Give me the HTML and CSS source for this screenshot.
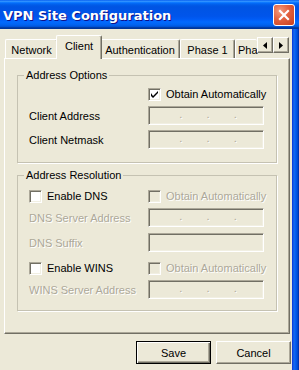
FILE: index.html
```html
<!DOCTYPE html>
<html lang="en">
<head>
  <meta charset="UTF-8" />
  <title>VPN Site Configuration</title>
  <link rel="stylesheet" href="styles.css">
</head>
<body>

  <div class="window">

    <!-- === Title Bar === -->
    <div class="titlebar">
      <span class="title">VPN Site Configuration</span>
      <span class="close">
        <svg width="12" height="12" viewBox="0 0 12 12"><path d="M2 2 L10 10 M10 2 L2 10" stroke="#fff" stroke-width="2.2" stroke-linecap="square" /></svg>
      </span>
    </div>

    <div class="frame">
      <div class="client">

        <!-- === Tabs === -->
        <div class="tabstrip">
          <div class="tabs">
            <div class="tab tab-network">Network</div>
            <div class="tab tab-client active">Client</div>
            <div class="tab tab-auth">Authentication</div>
            <div class="tab tab-phase1">Phase 1</div>
            <div class="tab tab-phase2">Pha</div>
          </div>
          <div class="scroller">
            <span class="arrow"><svg width="4" height="7" viewBox="0 0 4 7"><path d="M4 0 L0 3.5 L4 7 Z" fill="#000" /></svg></span>
            <span class="arrow"><svg width="4" height="7" viewBox="0 0 4 7"><path d="M0 0 L4 3.5 L0 7 Z" fill="#000" /></svg></span>
          </div>
        </div>

        <div class="panel">

          <!-- Address Options -->
          <fieldset class="group group-options">
            <legend>Address Options</legend>
            <div class="row row-check first">
              <span class="cell"></span>
              <label class="check"><span class="box"><svg width="7" height="7" viewBox="0 0 7 7"><path d="M0 2 L0 5 L2 7 L7 2 L7 0 L2 5 Z" fill="#000" /></svg></span>Obtain Automatically</label>
            </div>
            <div class="row row-field gap-s">
              <span class="cell">Client Address</span>
              <span class="field ip"><i>.</i><i>.</i><i>.</i></span>
            </div>
            <div class="row row-field gap-m">
              <span class="cell">Client Netmask</span>
              <span class="field ip"><i>.</i><i>.</i><i>.</i></span>
            </div>
          </fieldset>

          <!-- Address Resolution -->
          <fieldset class="group group-resolution">
            <legend>Address Resolution</legend>
            <div class="row row-check first">
              <label class="cell check"><span class="box"></span>Enable DNS</label>
              <label class="check disabled"><span class="box"></span>Obtain Automatically</label>
            </div>
            <div class="row row-field gap-s">
              <span class="cell disabled">DNS Server Address</span>
              <span class="field ip"><i>.</i><i>.</i><i>.</i></span>
            </div>
            <div class="row row-field gap-l">
              <span class="cell disabled">DNS Suffix</span>
              <span class="field"></span>
            </div>
            <div class="row row-check gap-l">
              <label class="cell check"><span class="box"></span>Enable WINS</label>
              <label class="check disabled"><span class="box"></span>Obtain Automatically</label>
            </div>
            <div class="row row-field gap-s">
              <span class="cell disabled">WINS Server Address</span>
              <span class="field ip"><i>.</i><i>.</i><i>.</i></span>
            </div>
          </fieldset>

        </div>

        <!-- === Dialog Buttons === -->
        <div class="actions">
          <button class="btn default">Save</button>
          <button class="btn">Cancel</button>
        </div>

      </div>
      <div class="edge"></div>
    </div>
  </div>

</body>
</html>
```

FILE: styles.css
```css
/* Basic Resets */
* { margin: 0; padding: 0; box-sizing: border-box; }
body {
  background: #ECE9D8;
  font-family: "Liberation Sans", Arial, sans-serif;
  font-size: 11px;
  color: #000;
  overflow: hidden;
}

/* === Window Frame === */
.window {
  width: 299px;
  height: 370px;
  display: flex;
  flex-direction: column;
}
.titlebar {
  height: 29px;
  flex: none;
  display: flex;
  align-items: center;
  justify-content: space-between;
  padding: 0 4px 0 3px;
  background: linear-gradient(to bottom, #0058EE 0%, #3593FF 4%, #288EFF 6%, #127DFF 8%, #036FFC 10%, #0262EE 14%, #0057E5 20%, #0054E3 24%, #0055EB 56%, #005BF5 66%, #026AFE 76%, #0062EF 86%, #0052D6 92%, #0040AB 94%, #003092 100%);
}
.title {
  font-family: "DejaVu Sans", sans-serif;
  font-weight: bold;
  font-size: 13px;
  color: #fff;
  text-shadow: 1px 1px 0 #0F1089;
  padding-top: 1px;
}
.close {
  width: 22px;
  height: 22px;
  display: flex;
  align-items: center;
  justify-content: center;
  border: 1px solid #fff;
  border-radius: 3px;
  background: radial-gradient(circle at 30% 30%, #F29A7E 0%, #E2613F 45%, #C73E1D 100%);
}
.frame {
  flex: 1;
  display: flex;
  min-height: 0;
}
.client {
  flex: 1;
  padding-top: 6px;
}
.edge {
  width: 7px;
  background: linear-gradient(to right, #0831D9 0, #166AEE 2px, #0058EE 4px, #0046C8 6px, #00229E 7px);
}

/* === Tabs === */
.tabstrip {
  display: flex;
  height: 23px;
  margin-left: 4px;
  width: 286px;
}
.tabs {
  flex: 0 0 253px;
  display: flex;
  align-items: flex-end;
  padding-left: 1px;
}
.tab {
  flex: none;
  height: 19px;
  display: flex;
  align-items: center;
  justify-content: center;
  border-top: 1px solid #fff;
  border-left: 1px solid #fff;
  border-right: 1px solid #716F64;
  border-radius: 2px 2px 0 0;
  box-shadow: inset -1px 0 #ACA899;
  padding-top: 1px;
}
.tab.active {
  position: relative;
  z-index: 1;
  height: 24px;
  margin: 0 -2px -1px;
  background: #ECE9D8;
  padding-top: 0;
  padding-bottom: 3px;
}
.tab-network { width: 53px; }
.tab-client  { width: 46px; }
.tab-auth    { width: 80px; }
.tab-phase1  { width: 55px; }
.tab-phase2  {
  width: 22px;
  justify-content: flex-start;
  padding-left: 2px;
  border-right: none;
  box-shadow: none;
}

.scroller {
  display: flex;
  margin-top: 2px;
}
.arrow {
  width: 16px;
  height: 16px;
  display: flex;
  align-items: center;
  justify-content: center;
  border: 1px solid;
  border-color: #fff #716F64 #716F64 #fff;
  box-shadow: inset -1px -1px #ACA899;
  background: #ECE9D8;
}

/* === Tab Panel === */
.panel {
  margin-left: 4px;
  width: 286px;
  height: 276px;
  border: 1px solid;
  border-color: #fff #716F64 #716F64 #fff;
  box-shadow: inset -1px -1px #ACA899;
  padding: 10px 12px 0;
}
.group {
  border: 1px solid #C5C2B2;
  box-shadow: 1px 1px 0 #fff;
  padding: 0 0 13px 6px;
}
.group legend {
  padding: 0 2px;
  line-height: 13px;
}
.group-resolution {
  margin-top: 6px;
  padding-bottom: 11px;
}

.row {
  display: flex;
  align-items: center;
  padding-left: 5px;
}
.row-check { height: 20px; }
.row-field { height: 19px; }
.row.first { margin-top: 2px; }
.group-resolution .row.first { margin-top: 4px; }
.row.gap-s { margin-top: 2px; }
.row.gap-m { margin-top: 5px; }
.row.gap-l { margin-top: 6px; }

.cell {
  width: 119px;
  flex: none;
}
.disabled {
  color: #ACA899;
  text-shadow: 1px 1px 0 #fff;
}

/* Checkboxes */
.check {
  display: flex;
  align-items: center;
}
.box {
  width: 13px;
  height: 13px;
  flex: none;
  display: flex;
  align-items: center;
  justify-content: center;
  margin-right: 5px;
  background: #fff;
  border: 1px solid;
  border-color: #ACA899 #fff #fff #ACA899;
  box-shadow: inset 1px 1px #716F64, inset -1px -1px #F1EFE2;
}
.check.disabled .box { background: #ECE9D8; }

/* Disabled text / IP fields */
.field {
  width: 116px;
  height: 19px;
  flex: none;
  display: flex;
  justify-content: space-evenly;
  padding: 0 2px 0 6px;
  border: 1px solid;
  border-color: #ACA899 #fff #fff #ACA899;
  box-shadow: inset 1px 1px #716F64, inset -1px -1px #F1EFE2;
  background: #ECE9D8;
}
.field i {
  font-style: normal;
  color: #ACA899;
  text-shadow: 1px 1px 0 #fff;
  line-height: 15px;
}

/* === Dialog Buttons === */
.actions {
  display: flex;
  justify-content: flex-end;
  gap: 5px;
  margin-top: 7px;
  padding-right: 1px;
}
.btn {
  width: 75px;
  height: 23px;
  font-family: "Liberation Sans", Arial, sans-serif;
  font-size: 11px;
  color: #000;
  background: #ECE9D8;
  border: 1px solid;
  border-color: #fff #716F64 #716F64 #fff;
  box-shadow: inset -1px -1px #ACA899;
}
.btn.default {
  border: 1px solid #000;
  box-shadow: inset 1px 1px #fff, inset -1px -1px #716F64, inset -2px -2px #ACA899;
}
```
